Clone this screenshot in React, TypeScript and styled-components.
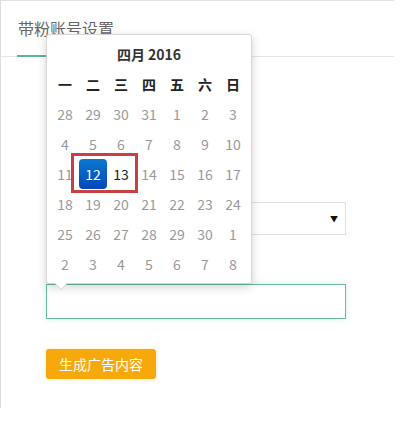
import React from 'react';
import styled, { createGlobalStyle } from 'styled-components';

const GlobalStyle = createGlobalStyle`
  html, body {
    margin: 0;
    padding: 0;
    background: #fff;
  }
  body {
    font-family: "Noto Sans CJK SC", "Noto Sans", sans-serif;
  }
`;

const Panel = styled.div`
  position: relative;
  width: 393px;
  height: 407px;
  border-top: 1px solid #e2e2e2;
  border-left: 1px solid #dcdcdc;
  box-sizing: content-box;
`;

const TabBar = styled.div`
  display: flex;
  height: 55px;
  border-bottom: 1px solid #e6e6e6;
  padding-left: 16px;
`;

const Tab = styled.div<{ active?: boolean }>`
  display: flex;
  align-items: center;
  padding: 0 1px;
  font-size: 16px;
  color: #666;
  border-bottom: 2px solid ${(p) => (p.active ? '#5cb597' : 'transparent')};
  margin-bottom: -1px;
`;

const Form = styled.div`
  display: flex;
  flex-direction: column;
  padding: 145px 48px 0 45px;
`;

const SelectBox = styled.div`
  height: 31px;
  border: 1px solid #e0e0e0;
  display: flex;
  align-items: center;
  justify-content: flex-end;
  padding-right: 7px;
  font-size: 8px;
  color: #111;
`;

const Field = styled.div`
  position: relative;
  margin-top: 49px;
`;

const TextInput = styled.div`
  height: 33px;
  border: 1px solid #6db99d;
  box-shadow: 0 0 6px rgba(110, 210, 175, 0.35);
`;

const Button = styled.button`
  align-self: flex-start;
  margin-top: 30px;
  width: 110px;
  height: 30px;
  border: none;
  border-radius: 3px;
  background: #f7a90c;
  color: #fff;
  font-family: "Noto Sans CJK SC", sans-serif;
  font-size: 14px;
  padding: 0;
  box-shadow: 0 0 4px rgba(255, 200, 80, 0.4);
`;

const Picker = styled.div`
  position: absolute;
  left: 45px;
  top: 33px;
  width: 196px;
  padding: 4px;
  background: #fff;
  border: 1px solid #d6d6d6;
  border-radius: 3px;
  box-shadow: 0 3px 10px rgba(0, 0, 0, 0.18);

  &::after {
    content: '';
    position: absolute;
    left: 8px;
    bottom: -6px;
    border-left: 6px solid transparent;
    border-right: 6px solid transparent;
    border-top: 6px solid #fff;
  }
  &::before {
    content: '';
    position: absolute;
    left: 7px;
    bottom: -7px;
    border-left: 7px solid transparent;
    border-right: 7px solid transparent;
    border-top: 7px solid #cfcfcf;
  }
`;

const Title = styled.div`
  height: 30px;
  display: flex;
  align-items: center;
  justify-content: center;
  font-size: 14px;
  font-weight: 700;
  color: #333;
`;

const Grid = styled.div`
  position: relative;
  display: grid;
  grid-template-columns: repeat(7, 28px);
  grid-auto-rows: 30px;
`;

const Head = styled.div`
  display: flex;
  align-items: center;
  justify-content: center;
  font-size: 14px;
  font-weight: 700;
  color: #222;
`;

const Day = styled.div<{ selected?: boolean; dark?: boolean }>`
  display: flex;
  align-items: center;
  justify-content: center;
  font-size: 14px;
  color: ${(p) => (p.selected ? '#fff' : p.dark ? '#222' : '#999')};
  border-radius: 4px;
  background: ${(p) => (p.selected ? 'linear-gradient(#0a78d1, #0348b8)' : 'transparent')};
`;

const Highlight = styled.div`
  position: absolute;
  left: 20px;
  top: 84px;
  width: 61px;
  height: 34px;
  border: 3px solid #c8403f;
`;

const weekdays = ['一', '二', '三', '四', '五', '六', '日'];
const days = [
  28, 29, 30, 31, 1, 2, 3,
  4, 5, 6, 7, 8, 9, 10,
  11, 12, 13, 14, 15, 16, 17,
  18, 19, 20, 21, 22, 23, 24,
  25, 26, 27, 28, 29, 30, 1,
  2, 3, 4, 5, 6, 7, 8,
];

export default function App() {
  return (
    <>
      <GlobalStyle />
      <Panel>
        <TabBar>
          <Tab active>带粉账号设置</Tab>
        </TabBar>
        <Form>
          <SelectBox>▼</SelectBox>
          <Field>
            <TextInput />
          </Field>
          <Button>生成广告内容</Button>
        </Form>
        <Picker>
          <Title>四月 2016</Title>
          <Grid>
            {weekdays.map((w) => (
              <Head key={w}>{w}</Head>
            ))}
            {days.map((d, i) => (
              <Day key={i} selected={i === 15} dark={i === 16}>
                {d}
              </Day>
            ))}
            <Highlight />
          </Grid>
        </Picker>
      </Panel>
    </>
  );
}
